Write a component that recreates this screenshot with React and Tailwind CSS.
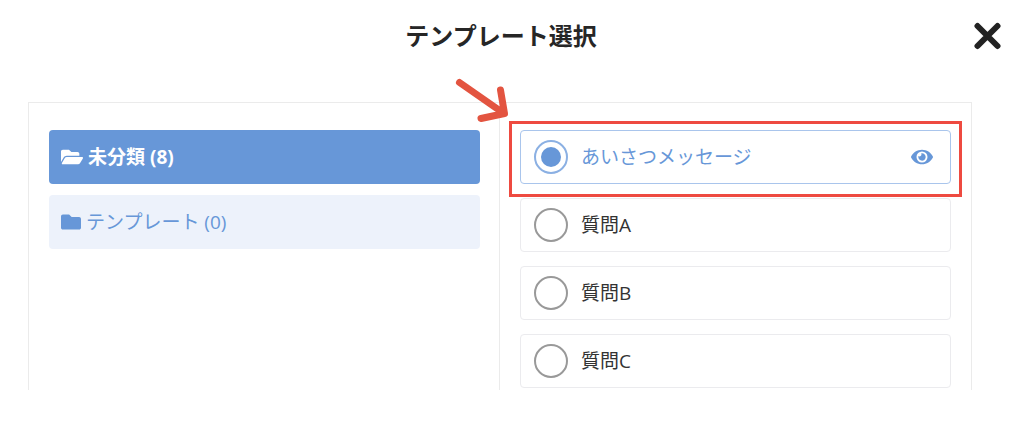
import { useState } from "react"
import { FaEye, FaFolder, FaFolderOpen } from "react-icons/fa"

const folders = [
  { id: "uncategorized", name: "未分類", count: 8 },
  { id: "template", name: "テンプレート", count: 0 },
]

const templates = [
  { id: "greeting", name: "あいさつメッセージ" },
  { id: "question-a", name: "質問A" },
  { id: "question-b", name: "質問B" },
  { id: "question-c", name: "質問C" },
]

const CloseIcon = () => (
  <svg width="28" height="28" viewBox="0 0 28 28" fill="none" stroke="currentColor" strokeWidth="6" strokeLinecap="round">
    <path d="M3.500 4 23.500 24M23.500 4 3.500 24" />
  </svg>
)

// Red frame and arrow that point at the first template
const Callout = () => (
  <>
    <div className="pointer-events-none absolute -top-2.5 -right-3 -bottom-3.5 -left-3 z-10 border-3 border-[#ee4a40]" />
    <svg
      className="pointer-events-none absolute -top-14 -left-[70px] z-10"
      width="64"
      height="52"
      viewBox="0 0 64 52"
      fill="none"
      stroke="#e35440"
      strokeWidth="7"
      strokeLinecap="round"
      strokeLinejoin="round"
    >
      <path d="M8.500 7.500 53 38.500M49.500 15 53.500 38.500 30 43.500" />
    </svg>
  </>
)

const FolderButton = ({ folder, active, onSelect }) => {
  const Icon = active ? FaFolderOpen : FaFolder

  return (
    <button
      type="button"
      onClick={onSelect}
      className={`flex h-[54px] w-full items-center gap-[5px] rounded px-3 text-left text-[19px] ${
        active ? "bg-[#6797d8] font-bold text-white" : "bg-[#edf2fb] text-[#6797d8]"
      }`}
    >
      <Icon className={active ? "h-5 w-[22px]" : "size-5"} />
      <span>
        {folder.name} ({folder.count})
      </span>
    </button>
  )
}

const TemplateRow = ({ template, checked, onSelect, highlighted }) => (
  <div
    className={`relative flex h-[54px] items-center rounded border pr-[17px] pl-[13px] ${
      checked ? "border-[#a9c5ec] text-[#6797d8]" : "border-[#ebebee] text-[#333333]"
    }`}
  >
    <input
      type="radio"
      name="template"
      id={template.id}
      checked={checked}
      onChange={onSelect}
      className="grid size-[34px] shrink-0 appearance-none place-content-center rounded-full border-2 border-[#999999] before:size-5 before:rounded-full checked:border-[#8bb0e3] checked:before:bg-[#6797d8]"
    />
    <label htmlFor={template.id} className="flex-1 pl-[13px] text-[19px]">
      {template.name}
    </label>
    {checked && (
      <button type="button" aria-label="プレビュー">
        <FaEye className="h-5 w-[22px]" />
      </button>
    )}
    {highlighted && <Callout />}
  </div>
)

export default function App() {
  const [folderId, setFolderId] = useState("uncategorized")
  const [templateId, setTemplateId] = useState("greeting")

  return (
    <div className="bg-white font-['Open_Sans','Noto_Sans_CJK_JP',sans-serif]">
      <header className="grid h-[72px] grid-cols-[1fr_auto_1fr] items-center pr-[22px]">
        <h1 className="col-start-2 text-2xl font-bold text-[#262626]">テンプレート選択</h1>
        <button type="button" aria-label="閉じる" className="justify-self-end text-[#222222]">
          <CloseIcon />
        </button>
      </header>

      <main className="mt-[30px] mr-[52px] ml-7 grid grid-cols-2 border border-b-0 border-[#ebebeb]">
        <nav className="flex flex-col gap-[11px] px-5 pt-[27px]">
          {folders.map((folder) => (
            <FolderButton
              key={folder.id}
              folder={folder}
              active={folder.id === folderId}
              onSelect={() => setFolderId(folder.id)}
            />
          ))}
        </nav>

        <section className="-ml-px flex flex-col gap-3.5 border-l border-[#ebebeb] px-5 pt-[27px] pb-0.5">
          {templates.map((template, i) => (
            <TemplateRow
              key={template.id}
              template={template}
              checked={template.id === templateId}
              onSelect={() => setTemplateId(template.id)}
              highlighted={i === 0}
            />
          ))}
        </section>
      </main>
    </div>
  )
}
